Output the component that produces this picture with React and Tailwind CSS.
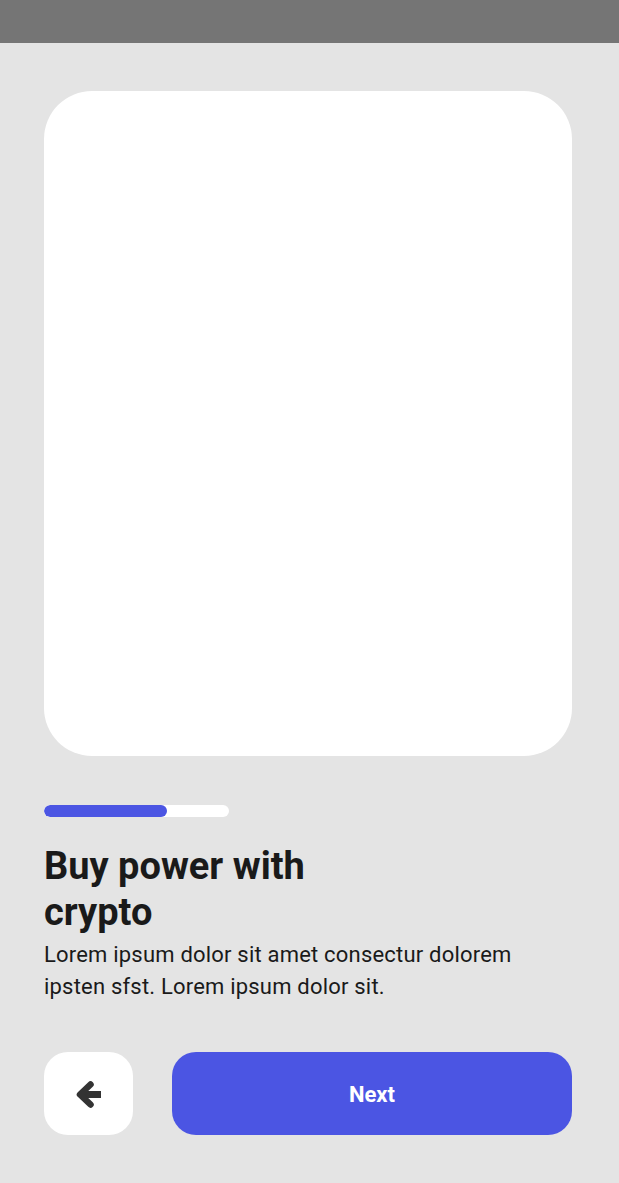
import React from "react";

export default function App() {
  return (
    <div className="w-[619px] h-[1183px] bg-[#e4e4e4] flex flex-col" style={{ fontFamily: "Roboto, 'Liberation Sans', sans-serif" }}>
      <div className="h-[43px] bg-[#757575] shrink-0" />
      <div className="pl-[44px] pt-[48px] flex flex-col w-[572px]">
        <div className="w-[528px] h-[665px] bg-white rounded-[48px]" />
        <div className="mt-[49px] w-[185px] h-[12px] bg-white rounded-full overflow-hidden">
          <div className="w-[123px] h-full bg-[#4b55e3] rounded-full" />
        </div>
        <h1 className="mt-[26px] w-[320px] text-[38px] leading-[46px] font-bold text-[#1a1a1a]">
          Buy power with crypto
        </h1>
        <p className="mt-[4px] text-[22px] tracking-[0.2px] leading-[32px] text-[#1a1a1a] w-[500px]">
          Lorem ipsum dolor sit amet consectur dolorem ipsten sfst. Lorem ipsum dolor sit.
        </p>
        <div className="mt-[49px] flex gap-[39px] w-[528px]">
          <button className="w-[89px] h-[83px] shrink-0 bg-white rounded-[24px] flex items-center justify-center">
            <svg width="28" height="28" viewBox="0 0 28 28" fill="none">
              <path d="M26 14.5H8" stroke="#333333" strokeWidth="7" strokeLinecap="butt" />
              <path d="M15.5 4.5L5 14.5L15.5 24.5" stroke="#333333" strokeWidth="6.5" strokeLinecap="round" strokeLinejoin="round" />
            </svg>
          </button>
          <button className="flex-1 h-[83px] pt-[2px] bg-[#4b55e3] rounded-[24px] text-white text-[22px] font-bold flex items-center justify-center">
            Next
          </button>
        </div>
      </div>
    </div>
  );
}
